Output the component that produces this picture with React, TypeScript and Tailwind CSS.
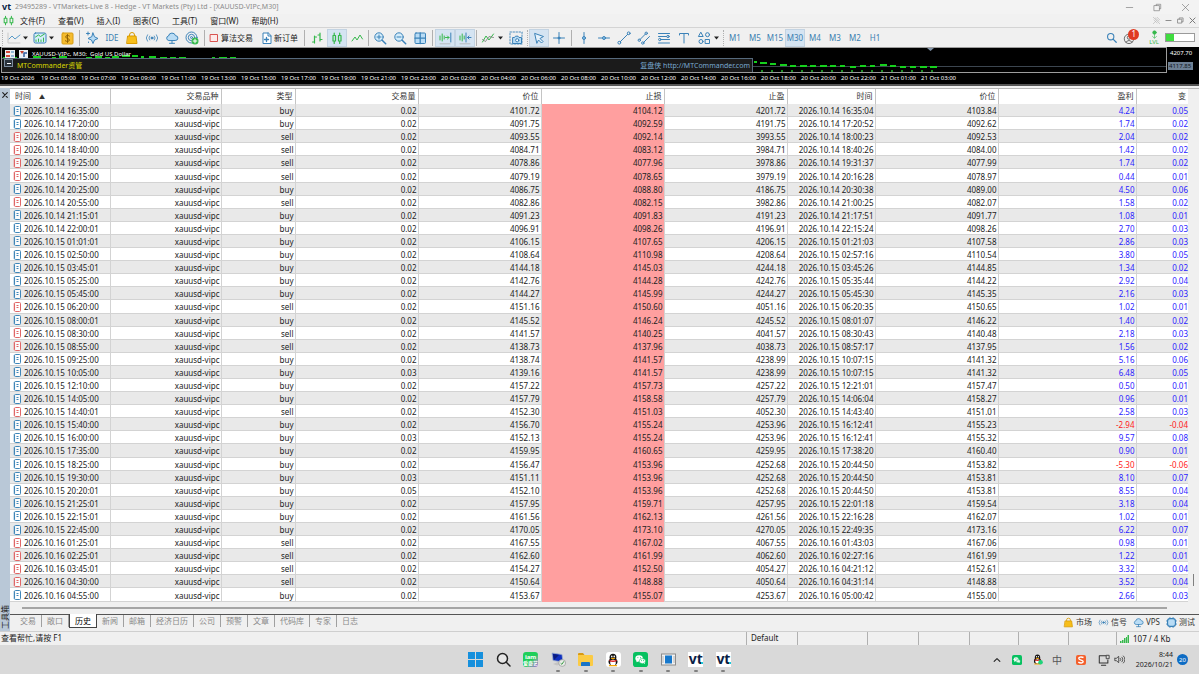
import React from 'react';
import clsx from 'clsx';

type Side = 'buy' | 'sell';

// open time, side, volume, price, stop loss, take profit, close time, close price, profit, change
type Deal = [string, Side, string, string, string, string, string, string, string, string];

const deals: Deal[] = [
  ['2026.10.14 16:35:00', 'buy', '0.02', '4101.72', '4104.12', '4201.72', '2026.10.14 16:35:04', '4103.84', '4.24', '0.05'],
  ['2026.10.14 17:20:00', 'buy', '0.02', '4091.75', '4092.59', '4191.75', '2026.10.14 17:20:52', '4092.62', '1.74', '0.02'],
  ['2026.10.14 18:00:00', 'sell', '0.02', '4093.55', '4092.14', '3993.55', '2026.10.14 18:00:23', '4092.53', '2.04', '0.02'],
  ['2026.10.14 18:40:00', 'sell', '0.02', '4084.71', '4083.12', '3984.71', '2026.10.14 18:40:26', '4084.00', '1.42', '0.02'],
  ['2026.10.14 19:25:00', 'sell', '0.02', '4078.86', '4077.96', '3978.86', '2026.10.14 19:31:37', '4077.99', '1.74', '0.02'],
  ['2026.10.14 20:15:00', 'sell', '0.02', '4079.19', '4078.65', '3979.19', '2026.10.14 20:16:28', '4078.97', '0.44', '0.01'],
  ['2026.10.14 20:25:00', 'buy', '0.02', '4086.75', '4088.80', '4186.75', '2026.10.14 20:30:38', '4089.00', '4.50', '0.06'],
  ['2026.10.14 20:55:00', 'sell', '0.02', '4082.86', '4082.15', '3982.86', '2026.10.14 21:00:25', '4082.07', '1.58', '0.02'],
  ['2026.10.14 21:15:01', 'buy', '0.02', '4091.23', '4091.83', '4191.23', '2026.10.14 21:17:51', '4091.77', '1.08', '0.01'],
  ['2026.10.14 22:00:01', 'buy', '0.02', '4096.91', '4098.26', '4196.91', '2026.10.14 22:15:24', '4098.26', '2.70', '0.03'],
  ['2026.10.15 01:01:01', 'buy', '0.02', '4106.15', '4107.65', '4206.15', '2026.10.15 01:21:03', '4107.58', '2.86', '0.03'],
  ['2026.10.15 02:50:00', 'buy', '0.02', '4108.64', '4110.98', '4208.64', '2026.10.15 02:57:16', '4110.54', '3.80', '0.05'],
  ['2026.10.15 03:45:01', 'buy', '0.02', '4144.18', '4145.03', '4244.18', '2026.10.15 03:45:26', '4144.85', '1.34', '0.02'],
  ['2026.10.15 05:25:00', 'buy', '0.02', '4142.76', '4144.28', '4242.76', '2026.10.15 05:35:44', '4144.22', '2.92', '0.04'],
  ['2026.10.15 05:45:00', 'buy', '0.02', '4144.27', '4145.99', '4244.27', '2026.10.15 05:45:30', '4145.35', '2.16', '0.03'],
  ['2026.10.15 06:20:00', 'sell', '0.02', '4151.16', '4150.60', '4051.16', '2026.10.15 06:20:35', '4150.65', '1.02', '0.01'],
  ['2026.10.15 08:00:01', 'buy', '0.02', '4145.52', '4146.24', '4245.52', '2026.10.15 08:01:07', '4146.22', '1.40', '0.02'],
  ['2026.10.15 08:30:00', 'sell', '0.02', '4141.57', '4140.25', '4041.57', '2026.10.15 08:30:43', '4140.48', '2.18', '0.03'],
  ['2026.10.15 08:55:00', 'sell', '0.02', '4138.73', '4137.96', '4038.73', '2026.10.15 08:57:17', '4137.95', '1.56', '0.02'],
  ['2026.10.15 09:25:00', 'buy', '0.02', '4138.74', '4141.57', '4238.99', '2026.10.15 10:07:15', '4141.32', '5.16', '0.06'],
  ['2026.10.15 10:05:00', 'buy', '0.03', '4139.16', '4141.57', '4238.99', '2026.10.15 10:07:15', '4141.32', '6.48', '0.05'],
  ['2026.10.15 12:10:00', 'buy', '0.02', '4157.22', '4157.73', '4257.22', '2026.10.15 12:21:01', '4157.47', '0.50', '0.01'],
  ['2026.10.15 14:05:00', 'buy', '0.02', '4157.79', '4158.58', '4257.79', '2026.10.15 14:06:04', '4158.27', '0.96', '0.01'],
  ['2026.10.15 14:40:01', 'sell', '0.02', '4152.30', '4151.03', '4052.30', '2026.10.15 14:43:40', '4151.01', '2.58', '0.03'],
  ['2026.10.15 15:40:00', 'buy', '0.02', '4156.70', '4155.24', '4253.96', '2026.10.15 16:12:41', '4155.23', '-2.94', '-0.04'],
  ['2026.10.15 16:00:00', 'buy', '0.03', '4152.13', '4155.24', '4253.96', '2026.10.15 16:12:41', '4155.32', '9.57', '0.08'],
  ['2026.10.15 17:35:00', 'buy', '0.02', '4159.95', '4160.65', '4259.95', '2026.10.15 17:38:20', '4160.40', '0.90', '0.01'],
  ['2026.10.15 18:25:00', 'buy', '0.02', '4156.47', '4153.96', '4252.68', '2026.10.15 20:44:50', '4153.82', '-5.30', '-0.06'],
  ['2026.10.15 19:30:00', 'buy', '0.03', '4151.11', '4153.96', '4252.68', '2026.10.15 20:44:50', '4153.81', '8.10', '0.07'],
  ['2026.10.15 20:20:01', 'buy', '0.05', '4152.10', '4153.96', '4252.68', '2026.10.15 20:44:50', '4153.81', '8.55', '0.04'],
  ['2026.10.15 21:25:01', 'buy', '0.02', '4157.95', '4159.71', '4257.95', '2026.10.15 22:01:18', '4159.54', '3.18', '0.04'],
  ['2026.10.15 22:15:01', 'buy', '0.02', '4161.56', '4162.13', '4261.56', '2026.10.15 22:16:28', '4162.07', '1.02', '0.01'],
  ['2026.10.15 22:45:00', 'buy', '0.02', '4170.05', '4173.10', '4270.05', '2026.10.15 22:49:35', '4173.16', '6.22', '0.07'],
  ['2026.10.16 01:25:01', 'sell', '0.02', '4167.55', '4167.02', '4067.55', '2026.10.16 01:43:03', '4167.06', '0.98', '0.01'],
  ['2026.10.16 02:25:01', 'sell', '0.02', '4162.60', '4161.99', '4062.60', '2026.10.16 02:27:16', '4161.99', '1.22', '0.01'],
  ['2026.10.16 03:45:01', 'sell', '0.02', '4154.27', '4152.50', '4054.27', '2026.10.16 04:21:12', '4152.61', '3.32', '0.04'],
  ['2026.10.16 04:30:00', 'sell', '0.02', '4150.64', '4148.88', '4050.64', '2026.10.16 04:31:14', '4148.88', '3.52', '0.04'],
  ['2026.10.16 04:55:00', 'buy', '0.02', '4153.67', '4155.07', '4253.67', '2026.10.16 05:00:42', '4155.00', '2.66', '0.03'],
];

const menus = ['文件(F)', '查看(V)', '插入(I)', '图表(C)', '工具(T)', '窗口(W)', '帮助(H)'];
const periods = ['M1', 'M5', 'M15', 'M30', 'M4', 'M3', 'M2', 'H1'];
const tabs = ['交易', '敞口', '历史', '新闻', '邮箱', '经济日历', '公司', '预警', '文章', '代码库', '专家', '日志'];
const columns = ['交易品种', '类型', '交易量', '价位', '止损', '止盈', '时间', '价位', '盈利', '变'];
const colWidths = [
  'w-[100px]', 'w-[111px]', 'w-[74px]', 'w-[123px]', 'w-[123px]', 'w-[123px]',
  'w-[123px]', 'w-[88px]', 'w-[123px]', 'w-[138px]', 'w-[52px]',
];
const axis = [
  '19 Oct 2026', '19 Oct 05:00', '19 Oct 07:00', '19 Oct 09:00', '19 Oct 11:00', '19 Oct 13:00',
  '19 Oct 15:00', '19 Oct 17:00', '19 Oct 19:00', '19 Oct 21:00', '19 Oct 23:00', '20 Oct 02:00',
  '20 Oct 04:00', '20 Oct 06:00', '20 Oct 08:00', '20 Oct 10:00', '20 Oct 12:00', '20 Oct 14:00',
  '20 Oct 16:00', '20 Oct 18:00', '20 Oct 20:00', '20 Oct 22:00', '21 Oct 01:00', '21 Oct 03:00',
];

const BLUE = '#3b82b8';
const GREEN = '#35b84b';

interface IconProps {
  children: React.ReactNode;
  color?: string;
  size?: number;
}

const Icon: React.FC<IconProps> = ({ children, color = BLUE, size = 14 }) => (
  <svg
    width={size}
    height={size}
    viewBox="0 0 14 14"
    fill="none"
    stroke={color}
    strokeWidth="1"
    strokeLinecap="round"
    strokeLinejoin="round"
    className="shrink-0"
  >
    {children}
  </svg>
);

const BagIcon = ({ size = 14 }: { size?: number }) => (
  <Icon color="#d99a00" size={size}>
    <path d="M4.500 5V4a2.500 2.500 0 0 1 5 0v1" />
    <path d="M3 5h8l1 7.500h-10z" fill="#f7be1a" />
  </Icon>
);

const SignalIcon = ({ size = 14 }: { size?: number }) => (
  <Icon size={size}>
    <circle cx="7" cy="7" r="1" fill={BLUE} />
    <path d="M4.700 5a3 3 0 0 0 0 4M9.300 5a3 3 0 0 1 0 4M2.500 3.800a5 5 0 0 0 0 6.400M11.500 3.800a5 5 0 0 1 0 6.400" strokeWidth=".8" />
  </Icon>
);

const CloudIcon = ({ size = 14 }: { size?: number }) => (
  <Icon size={size}>
    <path d="M3.500 9.500a2.300 2.300 0 0 1 0-4.500 3.600 3.600 0 0 1 7-.3 2.400 2.400 0 0 1 0 4.800z" fill="#b9dcf5" />
    <path d="M7 9.500v2.500M4.500 12.300h5" />
  </Icon>
);

interface ToolProps {
  label: string;
  active?: boolean;
  children: React.ReactNode;
}

const Tool: React.FC<ToolProps> = ({ label, active, children }) => (
  <button
    aria-label={label}
    className={clsx(
      'flex h-[18px] w-5 shrink-0 items-center justify-center border text-[#3b7fb0]',
      active ? 'border-[#c3d3e2] bg-[#d5e4f2]' : 'border-transparent'
    )}
  >
    {children}
  </button>
);

const Caret = () => (
  <button aria-label="更多" className="w-2 shrink-0">
    <svg width="5" height="4" viewBox="0 0 5 4"><path d="M0 .5h5L2.500 3.500z" fill="#222" /></svg>
  </button>
);

const Sep = ({ wide, dotted }: { wide?: boolean; dotted?: boolean }) => (
  <span className={clsx('flex h-4 shrink-0 justify-center', wide ? 'w-[5px]' : 'w-[3px]')}>
    <span className={clsx('border-l border-[#b0b0b0]', dotted && 'border-dotted')} />
  </span>
);

const VtMark = ({ size }: { size: 'sm' | 'lg' }) => (
  <span className={clsx('block font-bold text-[#0b1e46]', size === 'sm' ? 'text-[9px] leading-[10px]' : 'text-[14px] leading-[14px]')}>
    vt
  </span>
);

const TitleBar = () => (
  <header className="flex h-[14px] shrink-0 items-center bg-[#f3f3f3] pl-0.5 text-[#8b8b8b]">
    <div className="w-[13px]"><VtMark size="sm" /></div>
    <h1 className="text-[7px]">29495289 - VTMarkets-Live 8 - Hedge - VT Markets (Pty) Ltd - [XAUUSD-VIPc,M30]</h1>
    <div className="ml-auto flex">
      <button aria-label="最小化" className="flex w-7 justify-center">
        <Icon color="#777" size={9}><path d="M2 7h10" /></Icon>
      </button>
      <button aria-label="还原" className="flex w-7 justify-center">
        <Icon color="#777" size={9}><path d="M2 4h8v8H2zM5 4V2h7v7h-2" /></Icon>
      </button>
      <button aria-label="关闭" className="flex w-7 justify-center">
        <Icon color="#777" size={9}><path d="M2 2l10 10M12 2L2 12" /></Icon>
      </button>
    </div>
  </header>
);

const MenuBar = () => (
  <nav className="flex h-[13px] shrink-0 items-center bg-[#f1f1f1] pl-[3px] text-[#222]">
    <Icon color={GREEN} size={11}>
      <path d="M1.500 4h3.500v6H1.500zM9 4h3.500v6H9zM3.200 1.500V4M3.200 10v2.500M10.700 1.500V4M10.700 10v2.500" strokeWidth="1.300" />
    </Icon>
    <div className="flex gap-[13px] pl-1.5">
      {menus.map((m) => <button key={m}>{m}</button>)}
    </div>
    <div className="ml-auto flex items-center gap-[3px] pr-0.5">
      <Icon color="#b5b5b5" size={9}><path d="M2 2l10 10M5 3l6 5M2 12l4-4M8 2l4 4M3 6l5 5" /></Icon>
      <button aria-label="最小化窗口"><Icon color="#888" size={9}><path d="M3 7h8" strokeWidth="1.500" /></Icon></button>
      <button aria-label="还原窗口"><Icon color="#888" size={9}><path d="M3 5h6v6H3zM5 5V3h6v6H9" strokeWidth="1.300" /></Icon></button>
      <button aria-label="关闭窗口"><Icon color="#777" size={9}><path d="M3 3l8 8M11 3l-8 8" strokeWidth="1.500" /></Icon></button>
    </div>
  </nav>
);

const Toolbar = () => (
  <div className="flex h-5 shrink-0 items-center border-t border-[#d4d4d4] bg-[#f0f0f0] text-[#222]">
    <Sep wide dotted />
    <div className="flex w-[18px] shrink-0 justify-center">
      <Icon color="#5a9cc9"><path d="M1 2v10h12" stroke="#c8c8c8" /><path d="M2 8l3-3 3 3 5-4" /></Icon>
    </div>
    <Caret />
    <div className="flex w-[18px] shrink-0 justify-center">
      <Icon>
        <rect x="1" y="2" width="12" height="10" rx="1.500" fill="#d4ecfa" />
        <path d="M2.500 6l3-2 2 1.500L11.500 3M3 10.500V9M5.500 10.500V8M8 10.500V9M10.500 10.500V7" stroke={GREEN} />
      </Icon>
    </div>
    <Caret />
    <Tool label="报价">
      <Icon color="#d79c12"><rect x="2" y="2" width="11" height="11" rx="1" fill="#f5bc2f" /><path d="M9.500 5C8.500 4 5.500 4.200 5.700 6S9.500 7.500 9.500 9 6.500 11 5.300 9.800M7.500 3.500v8" stroke="#8a5c00" strokeWidth=".9" /></Icon>
    </Tool>
    <Sep wide />
    <Tool label="助手">
      <Icon><path d="M8 2l1.500 3.800L13 7.500 9.500 9 8 12.500 6.500 9 3 7.500l3.500-1.700z" fill="#b9dcf5" /><path d="M3 1v3M1.500 2.500h3M3.500 11v.5" /></Icon>
    </Tool>
    <Tool label="IDE">IDE</Tool>
    <Tool label="市场"><BagIcon /></Tool>
    <Tool label="信号"><SignalIcon /></Tool>
    <Tool label="VPS"><CloudIcon /></Tool>
    <Tool label="社区">
      <Icon>
        <circle cx="6.500" cy="6.500" r="5.500" /><circle cx="6.500" cy="6.500" r="3.200" /><circle cx="6.500" cy="6.500" r="1" />
        <circle cx="10" cy="10" r="3.500" fill={GREEN} stroke="none" /><path d="M8.200 10h3.600M10 8.200v3.600" stroke="#fff" />
      </Icon>
    </Tool>
    <Sep wide />
    <button className="flex shrink-0 items-center pr-[7px]">
      <Icon color="#d9534f"><rect x="3.500" y="3.500" width="7" height="7" fill="#fdeaea" /></Icon>
      <span>算法交易</span>
    </button>
    <button className="flex shrink-0 items-center pr-1">
      <Icon><path d="M8 2H3v10.500h8V5z" fill="#fff" /><path d="M8 2v3h3" /><path d="M4.500 8.500h4M6.500 6.500v4" strokeWidth="1.300" /></Icon>
      <span>新订单</span>
    </button>
    <Sep wide />
    <Tool label="柱状图"><Icon color={GREEN}><path d="M4.500 5v7M2.500 11h2M4.500 6h2M10 2v8M8 4h2M10 8.500h2" strokeWidth="1.200" /></Icon></Tool>
    <Tool label="K线图" active><Icon color={GREEN}><path d="M3 4.500h2.500v5.500H3zM8.500 4.500H11v5.500H8.500zM4.200 2v2.500M4.200 10v2.500M9.700 2v2.500M9.700 10v2.500" strokeWidth="1.200" /></Icon></Tool>
    <Tool label="折线图"><Icon color={GREEN}><path d="M2 10l3-4 2 3 3-5 2.500 4" /></Icon></Tool>
    <Sep />
    <Tool label="放大"><Icon><circle cx="6" cy="6" r="4.200" fill="#d4ecfa" /><path d="M9.200 9.200l3.500 3.500" strokeWidth="1.500" /><path d="M4 6h4M6 4v4" /></Icon></Tool>
    <Tool label="缩小"><Icon><circle cx="6" cy="6" r="4.200" fill="#d4ecfa" /><path d="M9.200 9.200l3.500 3.500" strokeWidth="1.500" /><path d="M4 6h4" /></Icon></Tool>
    <Tool label="平铺"><Icon><rect x="2" y="2" width="10.500" height="10.500" rx="1" fill="#b9dcf5" /><path d="M7.200 2v10.500M2 7.200h10.500" strokeWidth="1.300" /></Icon></Tool>
    <Sep wide />
    <Tool label="自动滚动" active><Icon color={GREEN}><path d="M2 5v4M4.200 3v7M6.200 5v3M7.500 6.500h3.500M9.500 5l1.500 1.500L9.500 8" /><path d="M12.800 2v9" stroke={BLUE} /><path d="M2 12.800h10" stroke="#aaa" strokeWidth=".7" /></Icon></Tool>
    <Tool label="图表平移" active><Icon color={GREEN}><path d="M2 5v4M4.200 3v7M6.200 5v3" /><path d="M8 2v9M13 6.500H9.500M11 5L9.500 6.500 11 8" stroke={BLUE} /><path d="M2 12.800h10" stroke="#aaa" strokeWidth=".7" /></Icon></Tool>
    <Sep />
    <Tool label="指标"><Icon color={GREEN}><path d="M1.500 11L5 5l3 4 4.500-6" /><path d="M1.500 8.500l3 2L8 5.500l4.500 1" stroke="#777" strokeWidth=".8" /></Icon></Tool>
    <Caret />
    <Tool label="截图"><Icon><rect x="1" y="1" width="12" height="12" strokeDasharray="1.500 1.500" strokeWidth=".9" /><path d="M4 6.500h1.500l1-1.300h2.500l1 1.300h2.500v6H4z" fill="#b9dcf5" /><circle cx="8.200" cy="9.300" r="1.600" fill="#fff" /></Icon></Tool>
    <Sep dotted />
    <Tool label="光标" active><Icon><path d="M3 2.500l8.500 3-3.500 2 3 3-1.500 1.500-3-3-1.500 3z" fill="#e6f2fb" /></Icon></Tool>
    <Tool label="十字线"><Icon><path d="M7 1.500v11M1.500 7h11" /><circle cx="7" cy="7" r="1" fill={BLUE} /></Icon></Tool>
    <Sep wide />
    <Tool label="垂直线"><Icon><path d="M7 1.500v11" /><circle cx="7" cy="7" r="1.500" fill="#8cc4ea" /></Icon></Tool>
    <Tool label="水平线"><Icon><path d="M1.500 7h11" /><circle cx="7" cy="7" r="1.500" fill="#8cc4ea" /></Icon></Tool>
    <Tool label="趋势线"><Icon><path d="M3.300 10.700l7.400-7.400" /><circle cx="2.300" cy="11.700" r="1.400" /><circle cx="11.700" cy="2.300" r="1.400" /></Icon></Tool>
    <Tool label="通道"><Icon><path d="M3 8.500L8.500 3M6.500 11.500L12.500 5.500" /><circle cx="2.300" cy="9.200" r="1.200" /><circle cx="9.200" cy="2.300" r="1.200" /><circle cx="5.800" cy="12" r="1.200" /></Icon></Tool>
    <Tool label="斐波那契"><Icon><path d="M1.500 2.500h11M1.500 5.500h8M4 8.500h8.500M1.500 12h11" /><circle cx="11" cy="5.500" r="1.200" /><circle cx="2.800" cy="8.500" r="1.200" /></Icon></Tool>
    <Tool label="文本"><Icon><path d="M2.500 4V2.500h9V4M7 2.500v9.500" /></Icon></Tool>
    <Tool label="图形"><Icon><path d="M4 1.500L6.200 5.500H1.800z" /><circle cx="10.500" cy="3.700" r="2" /><circle cx="4" cy="10.500" r="2" /><rect x="8.500" y="8.500" width="4" height="4" /></Icon></Tool>
    <Caret />
    <Sep dotted />
    {periods.map((p) => (
      <Tool key={p} label={p} active={p === 'M30'}>{p}</Tool>
    ))}
    <div className="ml-auto flex items-center gap-1.5 pr-1">
      <button aria-label="搜索"><Icon size={11}><circle cx="6" cy="6" r="4" strokeWidth="1.400" /><path d="M9 9l4 4" strokeWidth="1.600" /></Icon></button>
      <button aria-label="通知" className="relative flex w-5">
        <Icon color="#555" size={12}><circle cx="7" cy="8" r="5.500" /><circle cx="7" cy="6.500" r="2" /><path d="M3.500 12a4 4 0 0 1 7 0" /></Icon>
        <span className="absolute -top-[3px] right-1 flex h-[11px] w-[11px] items-center justify-center rounded-full bg-[#df3a22] leading-none text-white">1</span>
      </button>
      <div className="flex flex-col items-center text-[#35b84b]">
        <Icon color={GREEN} size={9}><circle cx="7" cy="4" r="2.800" fill={GREEN} /><path d="M7 7v5M4 10l3 3 3-3" /></Icon>
        <span className="text-[6px] leading-[6px]">LVL</span>
      </div>
      <div className="flex h-[9px] w-[30px] border border-[#9a9a9a] bg-white">
        <span className="w-2 bg-[#3fdc3f]" />
      </div>
    </div>
  </div>
);

// [x, y, width] of each candle body on the compressed plot
const candles = [
  [1, 9, 6], [10, 9, 5], [20, 10, 8], [31, 8, 8], [42, 10, 7], [50, 9, 4], [57, 8, 8], [67, 10, 5],
  [75, 10, 7], [84, 9, 6], [93, 8, 7], [103, 9, 5], [110, 8, 7], [120, 7, 8], [130, 7, 6], [139, 8, 3],
  [147, 8, 7], [158, 9, 7], [168, 9, 6], [177, 9, 7], [210, 9, 3], [217, 9, 8], [228, 9, 6],
  [752, 13, 3], [758, 14, 7], [768, 15, 6], [778, 16, 7], [788, 17, 6], [798, 17, 7], [808, 17, 6],
  [818, 17, 7], [828, 17, 6], [838, 17, 5], [848, 18, 6], [858, 17, 6], [868, 17, 5], [878, 16, 7],
  [888, 17, 6], [898, 18, 6], [908, 18, 6], [918, 18, 7], [928, 18, 7],
];

const ChartPanel = () => (
  <section className="shrink-0 bg-black text-white" aria-label="XAUUSD-VIPc, M30">
    <div className="flex h-[26px]">
      <div className="relative ml-px min-w-0 flex-1 overflow-hidden border border-[#9d9d9d]">
        <svg width="1165" height="24" className="absolute left-0 top-0">
          <path d="M0 18.500H1165" stroke="#3c4650" />
          {candles.map(([x, y, w]) => (
            <rect key={x} x={x} y={y} width={w} height="2" fill="#16d01e" />
          ))}
          {candles.filter(([x]) => x > 757).map(([x]) => (
            <rect key={x} x={x + 1} y="22" width="2" height="2" fill="#1c8a22" />
          ))}
          <path d="M925 0h7l-3.500 3z" fill="#8293a8" />
        </svg>
        <div className="absolute left-[3px] top-0.5 flex items-center gap-1">
          <svg width="10" height="8" viewBox="0 0 10 8"><path d="M0 0h10v8H0z" fill="#e9eef5" /><path d="M1 1h4v2H1zM1 5h4v2H1z" fill="#d2493a" /><path d="M6 2h3M6 6h3" stroke="#3b82b8" /></svg>
          <svg width="9" height="8" viewBox="0 0 9 8"><path d="M0 0h9v8H0z" fill="#e9eef5" /><path d="M1 1l2 3 2-3z" fill="#c03b2b" /><path d="M5 7V3h3" stroke="#2f5c9e" strokeWidth="1.500" fill="none" /></svg>
          <span className="whitespace-pre text-[6px] leading-[8px]">XAUUSD-VIPc, M30:  Gold US Dollar</span>
        </div>
        <div className="absolute left-0 top-[10px] flex h-[14px] w-[751px] justify-between border-r border-t border-[#56697c] bg-[#1b1b1b] pl-[15px] pr-0.5 text-[7px] leading-[13px]">
          <span className="text-[#d8d800]">MTCommander资管</span>
          <a href="http://MTCommander.com" className="text-[#79a9cf]">复盘侠 http://MTCommander.com</a>
          <button aria-label="收起" className="absolute left-0.5 top-0 flex h-2 w-[9px] items-center justify-center border border-[#7d8ea0] bg-[#2a323b]">
            <span className="h-px w-1 bg-white" />
          </button>
        </div>
      </div>
      <div className="flex w-8 shrink-0 flex-col gap-[5px] pt-0.5 text-[6px] leading-[8px]">
        <span className="pl-[3px]">4207.70</span>
        <span className="ml-px w-[25px] self-start bg-[#6d8094] pl-px text-[#10161c]">4117.85</span>
      </div>
    </div>
    <div className="flex h-[13px] overflow-hidden border-b-2 border-[#555] pl-px text-[6px] leading-[10px]">
      {axis.map((label) => (
        <span key={label} className="w-10 shrink-0 whitespace-nowrap">{label}</span>
      ))}
    </div>
  </section>
);

const DealIcon = ({ side }: { side: Side }) => {
  const c = side === 'buy' ? '#3f86b8' : '#e06666';
  return (
    <svg width="8" height="10" viewBox="0 0 8 10" fill="none" stroke={c} className="shrink-0">
      <path d="M1.500 1v8" strokeOpacity=".5" strokeWidth="2" />
      <rect x="1.500" y=".5" width="6" height="9" rx="1" fill="#fff" fillOpacity=".8" />
      <path d="M3.500 3.500h2M3.500 5.500h2" />
    </svg>
  );
};

const HistoryTable = () => (
  <table className="h-full w-full table-fixed border-collapse bg-white text-right leading-[11px]">
    <colgroup>
      {colWidths.map((w, i) => <col key={i} className={w} />)}
    </colgroup>
    <thead>
      <tr className="align-top leading-[14px] text-[#333]">
        <th className="h-[15px] border-r border-[#c4c4c4] p-0 pl-[5px] text-left font-normal">
          时间 <span className="pl-1.5 text-[6px]">▲</span>
        </th>
        {columns.map((c, i) => (
          <th key={i} className="border-r border-[#c4c4c4] p-0 pr-0.5 font-normal last:border-r-0">{c}</th>
        ))}
      </tr>
    </thead>
    <tbody>
      {deals.map(([open, side, volume, price, sl, tp, close, closePrice, profit, change]) => {
        const cell = 'border-r border-b border-[#d3d3d3] p-0 pt-px pr-px';
        const money = profit.startsWith('-') ? 'text-[#ff2020]' : 'text-[#2a1cff]';
        return (
          <tr key={open} className="odd:bg-[#e9e9e9]">
            <td className={cell}>
              <div className="flex items-center gap-[3px] pl-[3px]">
                <DealIcon side={side} />
                {open}
              </div>
            </td>
            <td className={cell}>xauusd-vipc</td>
            <td className={cell}>{side}</td>
            <td className={cell}>{volume}</td>
            <td className={cell}>{price}</td>
            <td className="border-r border-[#d3d3d3] bg-[#ff9f9f] p-0 pt-px pr-px">{sl}</td>
            <td className={cell}>{tp}</td>
            <td className={cell}>{close}</td>
            <td className={cell}>{closePrice}</td>
            <td className={clsx(cell, money)}>{profit}</td>
            <td className={clsx('border-b border-[#d3d3d3] p-0 pt-px', money)}>{change}</td>
          </tr>
        );
      })}
    </tbody>
  </table>
);

const Toolbox = () => (
  <section className="flex min-h-0 flex-1 pt-0.5">
    <div className="flex w-[10px] shrink-0 flex-col items-center justify-between bg-[#b9c8d7] pb-0.5 pt-[3px] text-[#222]">
      <button aria-label="关闭工具箱"><Icon color="#222" size={8}><path d="M3 3l8 8M11 3l-8 8" strokeWidth="2" /></Icon></button>
      <span className="rotate-180 leading-[10px] [text-orientation:sideways] [writing-mode:vertical-rl]">工具箱</span>
    </div>
    <div className="flex min-w-0 flex-1 flex-col">
      <div className="flex min-h-0 flex-1 border-t border-[#b5b5b5]">
        <div className="min-w-0 flex-1">
          <HistoryTable />
        </div>
        <div className="flex w-[11px] shrink-0 flex-col items-center justify-end pb-4">
          <span className="h-3 w-px bg-[#808080]" />
        </div>
      </div>
      <div className="flex h-3 shrink-0 items-center pl-3 pr-8">
        <span className="h-0.5 flex-1 bg-[#a5a5a5]" />
      </div>
      <div className="flex h-[17px] shrink-0 items-start border-t border-[#555] pl-[5px]">
        {tabs.map((t) => (
          <button
            key={t}
            className={clsx(
              'shrink-0 px-[5px] leading-[12px]',
              t === '历史'
                ? '-mt-px border border-t-0 border-[#444] bg-white pt-px text-black'
                : 'border-r border-[#a0a0a0] text-[#8a8a8a] last-of-type:border-r-0'
            )}
          >
            {t}
          </button>
        ))}
        <div className="ml-auto flex gap-1.5 pr-1 pt-px text-[#333]">
          <button className="flex items-center gap-0.5"><BagIcon size={11} />市场</button>
          <button className="flex items-center gap-0.5"><SignalIcon size={11} />信号</button>
          <button className="flex items-center gap-0.5"><CloudIcon size={11} />VPS</button>
          <button className="flex items-center gap-0.5">
            <Icon size={11}><rect x="2" y="2" width="10" height="10" rx="3" fill="#b9dcf5" strokeWidth="1.500" /><path d="M5 .5v1M9 .5v1M5 12.500v1M9 12.500v1M.5 5h1M.5 9h1M12.500 5h1M12.500 9h1" /></Icon>
            测试
          </button>
        </div>
      </div>
    </div>
  </section>
);

const statusCells = ['w-[70px]', 'w-[51px]', 'w-[51px]', 'w-[49px]', 'w-[50px]', 'w-[48px]'];

const StatusBar = () => (
  <footer className="flex h-[14px] shrink-0 border-t border-[#cfcfcf] bg-[#f0f0f0] leading-[12px] text-[#222]">
    <span className="flex-1 pl-px">查看帮忙,请按 F1</span>
    <span className="w-[51px] border-l border-[#b0b0b0] pl-1">Default</span>
    {statusCells.map((w, i) => (
      <span key={i} className={clsx('border-l border-[#b0b0b0]', w)} />
    ))}
    <span className="flex w-[83px] items-center gap-1 border-l border-[#b0b0b0] pl-[3px]">
      <svg width="9" height="8" viewBox="0 0 9 8" fill={GREEN}><path d="M0 6h1.500v2H0zM2 5h1.500v3H2zM4 3h1.500v5H4zM6 2h1v6H6zM7.500 0H9v8H7.500z" /></svg>
      107 / 4 Kb
    </span>
  </footer>
);

const WeChat = ({ size }: { size: number }) => (
  <svg width={size} height={size} viewBox="0 0 16 16">
    <rect width="16" height="16" rx="3" fill="#07c160" />
    <ellipse cx="6.500" cy="6.800" rx="4" ry="3.300" fill="#fff" />
    <ellipse cx="10" cy="9.700" rx="3.400" ry="2.700" fill="#fff" stroke="#07c160" strokeWidth=".6" />
    <path d="M4 9l-.5 2L6 9.800zM11.500 12l1.300.9-.2-1.800z" fill="#fff" />
    <path d="M5.200 6h.01M8 6h.01M9 9.200h.01M11.200 9.200h.01" stroke="#07c160" strokeWidth="1" strokeLinecap="round" />
  </svg>
);

const Penguin = ({ size, online }: { size: number; online?: boolean }) => (
  <svg width={size} height={size} viewBox="0 0 16 16">
    <ellipse cx="8" cy="10" rx="5.200" ry="4.600" fill="#151515" />
    <ellipse cx="8" cy="5" rx="3.900" ry="4.200" fill="#151515" />
    <ellipse cx="8" cy="11" rx="3.200" ry="3.300" fill="#fff" />
    <ellipse cx="6.600" cy="4" rx=".9" ry="1.200" fill="#fff" />
    <ellipse cx="9.400" cy="4" rx=".9" ry="1.200" fill="#fff" />
    <ellipse cx="8" cy="6.200" rx="2.400" ry=".9" fill="#f7a600" />
    <path d="M4 7.600q4 2.200 8 0l.3 1.600q-4.300 2-8.600 0z" fill="#e02020" />
    <path d="M4 14.500h3.500M8.500 14.500H12" stroke="#f7a600" strokeWidth="1.500" strokeLinecap="round" />
    {online && <circle cx="12.500" cy="12" r="3.300" fill="#1fd37a" />}
  </svg>
);

const VtTile = () => (
  <span className="relative flex h-[15px] w-[15px] justify-center bg-white">
    <VtMark size="lg" />
    <span className="absolute bottom-[3px] right-0 h-0.5 w-0.5 bg-[#19c8dc]" />
  </span>
);

const apps: { name: string; running?: boolean; icon: React.ReactNode }[] = [
  {
    name: '开始',
    icon: <svg width="15" height="15" viewBox="0 0 15 15" fill="#1690dd"><path d="M0 0h7v7H0zM8 0h7v7H8zM0 8h7v7H0zM8 8h7v7H8z" /></svg>,
  },
  {
    name: '搜索',
    icon: <svg width="15" height="15" viewBox="0 0 15 15" fill="none" stroke="#222" strokeWidth="1.500"><circle cx="6.500" cy="6.500" r="5" fill="#e6e6e6" /><path d="M10.300 10.300l3.700 3.700" strokeLinecap="round" /></svg>,
  },
  {
    name: 'iam 爱奇艺',
    icon: (
      <span className="flex h-[15px] w-[15px] flex-col items-center justify-center overflow-hidden rounded-[3px] bg-linear-to-br from-[#1fcf5a] from-55% to-[#9a5fd8] text-[6px] font-bold leading-[6px] text-white">
        <span>iam</span>
        <span className="whitespace-nowrap text-[5px]">爱奇艺</span>
      </span>
    ),
  },
  {
    name: '远程桌面',
    running: true,
    icon: <svg width="15" height="15" viewBox="0 0 15 15"><path d="M1 1l10 1.500 1 7.500-10-1.500z" fill="#1030c0" stroke="#9fb0cc" strokeWidth=".8" /><path d="M2 2l6 .9L3 8z" fill="#0a1c80" /><path d="M2 12l6-2.500 4 2-6 2z" fill="#c4c4c4" /><circle cx="11.200" cy="11" r="3.400" fill="#e8ece8" stroke="#8a8a8a" strokeWidth=".6" /><path d="M9.700 11.300l1.200 1 2-3" stroke="#3c9c46" fill="none" /></svg>,
  },
  {
    name: '文件资源管理器',
    running: true,
    icon: <svg width="15" height="15" viewBox="0 0 15 15"><path d="M0 2q0-1 1-1h4l1.500 2H0z" fill="#d89a14" /><path d="M0 3h14q1 0 1 1v9q0 1-1 1H1q-1 0-1-1z" fill="#fbcb45" /><path d="M3 14v-3q0-1 1-1h7q1 0 1 1v3z" fill="#1874c8" /></svg>,
  },
  { name: 'QQ', running: true, icon: <span className="flex h-[15px] w-[15px] items-center justify-center rounded-[3px] bg-white"><Penguin size={14} /></span> },
  { name: '微信', running: true, icon: <WeChat size={15} /> },
  {
    name: '虚拟机',
    running: true,
    icon: <svg width="15" height="15" viewBox="0 0 15 15"><rect x=".5" y="2" width="14" height="11" fill="#f2f2f2" stroke="#8c8c8c" /><rect x="4" y="3.500" width="7" height="8" fill="#1678cc" /><path d="M2 4v7M13 4v7" stroke="#b8b8b8" /></svg>,
  },
  { name: 'VT 终端 1', running: true, icon: <VtTile /> },
  { name: 'VT 终端 2', running: true, icon: <VtTile /> },
];

const Taskbar = () => (
  <div className="grid h-[29px] shrink-0 grid-cols-[1fr_auto_1fr] bg-[#d9d9d9] text-[#222]">
    <span />
    <div className="flex w-[263px] justify-between pt-[7px]">
      {apps.map((app) => (
        <button key={app.name} aria-label={app.name} className="flex w-[15px] flex-col items-center gap-[3px]">
          {app.icon}
          {app.running && <span className="h-0.5 w-1 rounded-full bg-[#808080]" />}
        </button>
      ))}
    </div>
    <div className="flex items-center justify-end pr-[11px]">
      <button aria-label="显示隐藏的图标" className="flex w-5 justify-center">
        <Icon color="#222" size={10}><path d="M3 9l4-4 4 4" strokeWidth="1.500" /></Icon>
      </button>
      <button aria-label="微信消息" className="flex w-5 justify-center"><WeChat size={10} /></button>
      <button aria-label="QQ 消息" className="flex w-5 justify-center"><Penguin size={11} online /></button>
      <button className="w-5 text-[10px] leading-none text-[#555]">中</button>
      <button aria-label="搜狗输入法" className="flex w-7 justify-center">
        <svg width="10" height="10" viewBox="0 0 10 10"><rect width="10" height="10" rx="2" fill="#f4602c" /><path d="M7.500 2.500C5 1.500 2.500 2 2.800 3.600S7.400 5 7.200 6.700 4 8.200 2.300 7.200" stroke="#fff" strokeWidth="1.400" fill="none" /></svg>
      </button>
      <button aria-label="网络" className="flex w-[18px] justify-center">
        <Icon color="#333" size={12}><path d="M9 2H1.500v8.500h10V7M4 13h5" strokeWidth="1.200" /><rect x="10" y="1.500" width="3" height="4" /></Icon>
      </button>
      <button aria-label="音量" className="flex w-3 justify-center">
        <Icon color="#333" size={11}><path d="M1 5.500v3h2l3 2.500V3L3 5.500zM8 5.500a2 2 0 0 1 0 3M10 4a4 4 0 0 1 0 6M12 2.500a6 6 0 0 1 0 9" /></Icon>
      </button>
      <div className="w-12 text-right text-[7px] leading-[10px]">
        <div>8:44</div>
        <div>2026/10/21</div>
      </div>
      <span className="ml-1 flex h-[11px] w-[11px] items-center justify-center rounded-full bg-[#0e6cc4] text-[6px] leading-none text-white">20</span>
    </div>
  </div>
);

const App: React.FC = () => {
  return (
    <div className="flex h-screen flex-col overflow-hidden bg-[#f0f0f0] font-['Noto_Sans','Noto_Sans_CJK_SC',sans-serif] text-[8px] leading-[12px] text-[#222]">
      <TitleBar />
      <MenuBar />
      <Toolbar />
      <ChartPanel />
      <Toolbox />
      <StatusBar />
      <Taskbar />
    </div>
  );
};

export default App;
